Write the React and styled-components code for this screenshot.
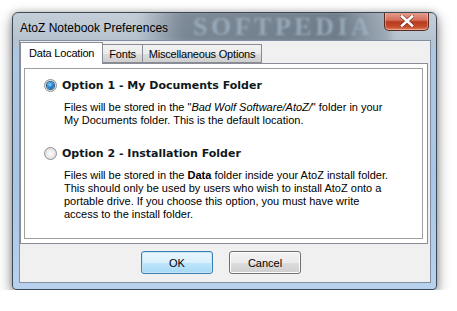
import React from 'react';
import styled, { createGlobalStyle } from 'styled-components';

const Global = createGlobalStyle`
  html, body {
    margin: 0;
    background: #ffffff;
  }
  body {
    padding: 12px 0 0 12px;
    font-family: "Liberation Sans", Arial, sans-serif;
    font-size: 11px;
    color: #000;
  }
`;

export default function App() {
  return (
    <>
      <Global />
      <Window>
        <TitleBar>
          <GlassBand />
          <Watermark>SOFTPEDIA</Watermark>
          <Title>AtoZ Notebook Preferences</Title>
          <CloseButton aria-label="Close">
            <svg width="14" height="12" viewBox="0 0 14 12">
              <path d="M2 1.5 L12 10.5 M12 1.5 L2 10.5" stroke="#4a1a12" strokeWidth="4" strokeLinecap="square" opacity="0.55" />
              <path d="M2 1.5 L12 10.5 M12 1.5 L2 10.5" stroke="#ffffff" strokeWidth="2.6" strokeLinecap="square" />
            </svg>
          </CloseButton>
        </TitleBar>
        <Client>
          <TabStrip>
            <Tab $active>Data Location</Tab>
            <Tab>Fonts</Tab>
            <Tab>Miscellaneous Options</Tab>
          </TabStrip>
          <Panel>
            <Frame>
              <Option>
                <Radio $checked />
                <OptionTitle>Option 1 - My Documents Folder</OptionTitle>
              </Option>
              <Desc>
                Files will be stored in the "<em>Bad Wolf Software/AtoZ/</em>" folder in your
                <br />
                My Documents folder. This is the default location.
              </Desc>
              <Option $second>
                <Radio />
                <OptionTitle>Option 2 - Installation Folder</OptionTitle>
              </Option>
              <Desc>
                Files will be stored in the <b>Data</b> folder inside your AtoZ install folder.
                <br />
                This should only be used by users who wish to install AtoZ onto a
                <br />
                portable drive. If you choose this option, you must have write
                <br />
                access to the install folder.
              </Desc>
            </Frame>
          </Panel>
          <ButtonRow>
            <Button $default>OK</Button>
            <Button>Cancel</Button>
          </ButtonRow>
        </Client>
      </Window>
    </>
  );
}

const Window = styled.div`
  width: 425px;
  height: 278px;
  box-sizing: border-box;
  border: 1px solid #3c4a58;
  border-radius: 6px 6px 4px 4px;
  background: linear-gradient(to bottom, #c4ced8 0px, #b6c3cf 27px, #afc8e2 40px, #a9c6e6 60%, #b8d2ee 100%);
  box-shadow: 0 5px 14px rgba(0, 0, 0, 0.45), 0 0 6px rgba(0, 0, 0, 0.2);
  padding: 0 5px 6px 6px;
  display: flex;
  flex-direction: column;
`;

const TitleBar = styled.div`
  position: relative;
  height: 27px;
  display: flex;
  align-items: center;
  overflow: hidden;
`;

const GlassBand = styled.div`
  position: absolute;
  left: 118px;
  right: 40px;
  top: -4px;
  bottom: -4px;
  background: linear-gradient(to right, rgba(70, 84, 98, 0) 0%, rgba(70, 84, 98, 0.55) 18%, rgba(60, 74, 88, 0.6) 80%, rgba(70, 84, 98, 0.2) 100%);
  filter: blur(3px);
`;

const Watermark = styled.div`
  position: absolute;
  left: 174px;
  top: 1px;
  line-height: 26px;
  font-family: "Liberation Serif", serif;
  font-weight: bold;
  font-size: 26px;
  letter-spacing: 3.5px;
  color: #9fb2c4;
  opacity: 0.8;
  filter: blur(1.3px);
  white-space: nowrap;
`;

const Title = styled.span`
  position: relative;
  margin-left: 1px;
  margin-top: 2px;
  font-size: 12px;
  color: #000;
`;

const CloseButton = styled.div`
  position: absolute;
  right: 2px;
  top: -1px;
  width: 45px;
  height: 19px;
  box-sizing: border-box;
  border: 1px solid #5a2a22;
  border-top: none;
  border-radius: 0 0 5px 5px;
  background: linear-gradient(to bottom, #e8a293 0%, #d5705c 45%, #b83a1f 55%, #c44a2a 80%, #e0805e 100%);
  box-shadow: inset 0 0 0 1px rgba(255, 255, 255, 0.35);
  display: flex;
  align-items: center;
  justify-content: center;
`;

const Client = styled.div`
  flex: 1;
  box-sizing: border-box;
  background: #f0f0f0;
  border: 1px solid #7f8fa1;
  padding: 1px 2px 0 0;
  display: flex;
  flex-direction: column;
`;

const TabStrip = styled.div`
  display: flex;
  align-items: flex-end;
  height: 21px;
  position: relative;
  z-index: 1;
`;

const Tab = styled.div`
  box-sizing: border-box;
  height: ${p => (p.$active ? '22px' : '19px')};
  margin-bottom: ${p => (p.$active ? '-1px' : '0')};
  padding: ${p => (p.$active ? '3px 8px 0 8px' : '2px 6px 0 6px')};
  border: 1px solid #898c95;
  border-bottom: ${p => (p.$active ? 'none' : '1px solid #898c95')};
  border-left: none;
  background: ${p => (p.$active ? '#ffffff' : 'linear-gradient(to bottom, #f2f2f2 0%, #ebebeb 50%, #dddddd 51%, #cfcfcf 100%)')};
  font-size: 11px;
  letter-spacing: -0.2px;
  line-height: 14px;
  white-space: nowrap;
  &:first-child {
    border-left: 1px solid #898c95;
  }
`;

const Panel = styled.div`
  box-sizing: border-box;
  height: 181px;
  background: #ffffff;
  border: 1px solid #898c95;
  padding: 4px 4px 4px 3px;
  display: flex;
`;

const Frame = styled.div`
  flex: 1;
  box-sizing: border-box;
  border: 1px solid #a0a0a0;
  padding: 9px 0 0 19px;
`;

const Option = styled.div`
  display: flex;
  align-items: center;
  gap: 5px;
  height: 14px;
  margin-top: ${p => (p.$second ? '19px' : '0')};
`;

const Radio = styled.span`
  width: 13px;
  height: 13px;
  box-sizing: border-box;
  border-radius: 50%;
  border: 1px solid #8e8f8f;
  background: radial-gradient(circle at 50% 50%, #ffffff 0%, #e6e6e6 55%, #d4d4d4 100%);
  display: flex;
  align-items: center;
  justify-content: center;
  flex-shrink: 0;
  &::after {
    content: '';
    display: ${p => (p.$checked ? 'block' : 'none')};
    width: 7px;
    height: 7px;
    border-radius: 50%;
    background: radial-gradient(circle at 40% 35%, #8fd4ff 0%, #2a8ad4 45%, #0c4a7e 100%);
    box-shadow: 0 0 0 1px #1f5c8a;
  }
`;

const OptionTitle = styled.span`
  font-family: "DejaVu Sans", "Liberation Sans", sans-serif;
  font-weight: bold;
  font-size: 11px;
  color: #101820;
`;

const Desc = styled.p`
  margin: 9px 0 0 20px;
  font-size: 11px;
  line-height: 13px;
  color: #000;
  em {
    font-style: italic;
  }
  b {
    font-weight: bold;
  }
`;

const ButtonRow = styled.div`
  flex: 1;
  display: flex;
  align-items: flex-start;
  justify-content: center;
  gap: 16px;
  padding: 7px 6px 0 0;
`;

const Button = styled.div`
  width: 72px;
  height: 23px;
  box-sizing: border-box;
  border: 1px solid ${p => (p.$default ? '#3c7fb1' : '#707070')};
  border-radius: 3px;
  background: ${p =>
    p.$default
      ? 'linear-gradient(to bottom, #eaf6fd 0%, #d9f0fc 50%, #bee6fd 51%, #a7d9f5 100%)'
      : 'linear-gradient(to bottom, #f2f2f2 0%, #ebebeb 50%, #dddddd 51%, #cfcfcf 100%)'};
  box-shadow: inset 0 0 0 1px ${p => (p.$default ? '#c4e5f6' : '#fcfcfc')};
  display: flex;
  align-items: center;
  justify-content: center;
  font-size: 11px;
`;
